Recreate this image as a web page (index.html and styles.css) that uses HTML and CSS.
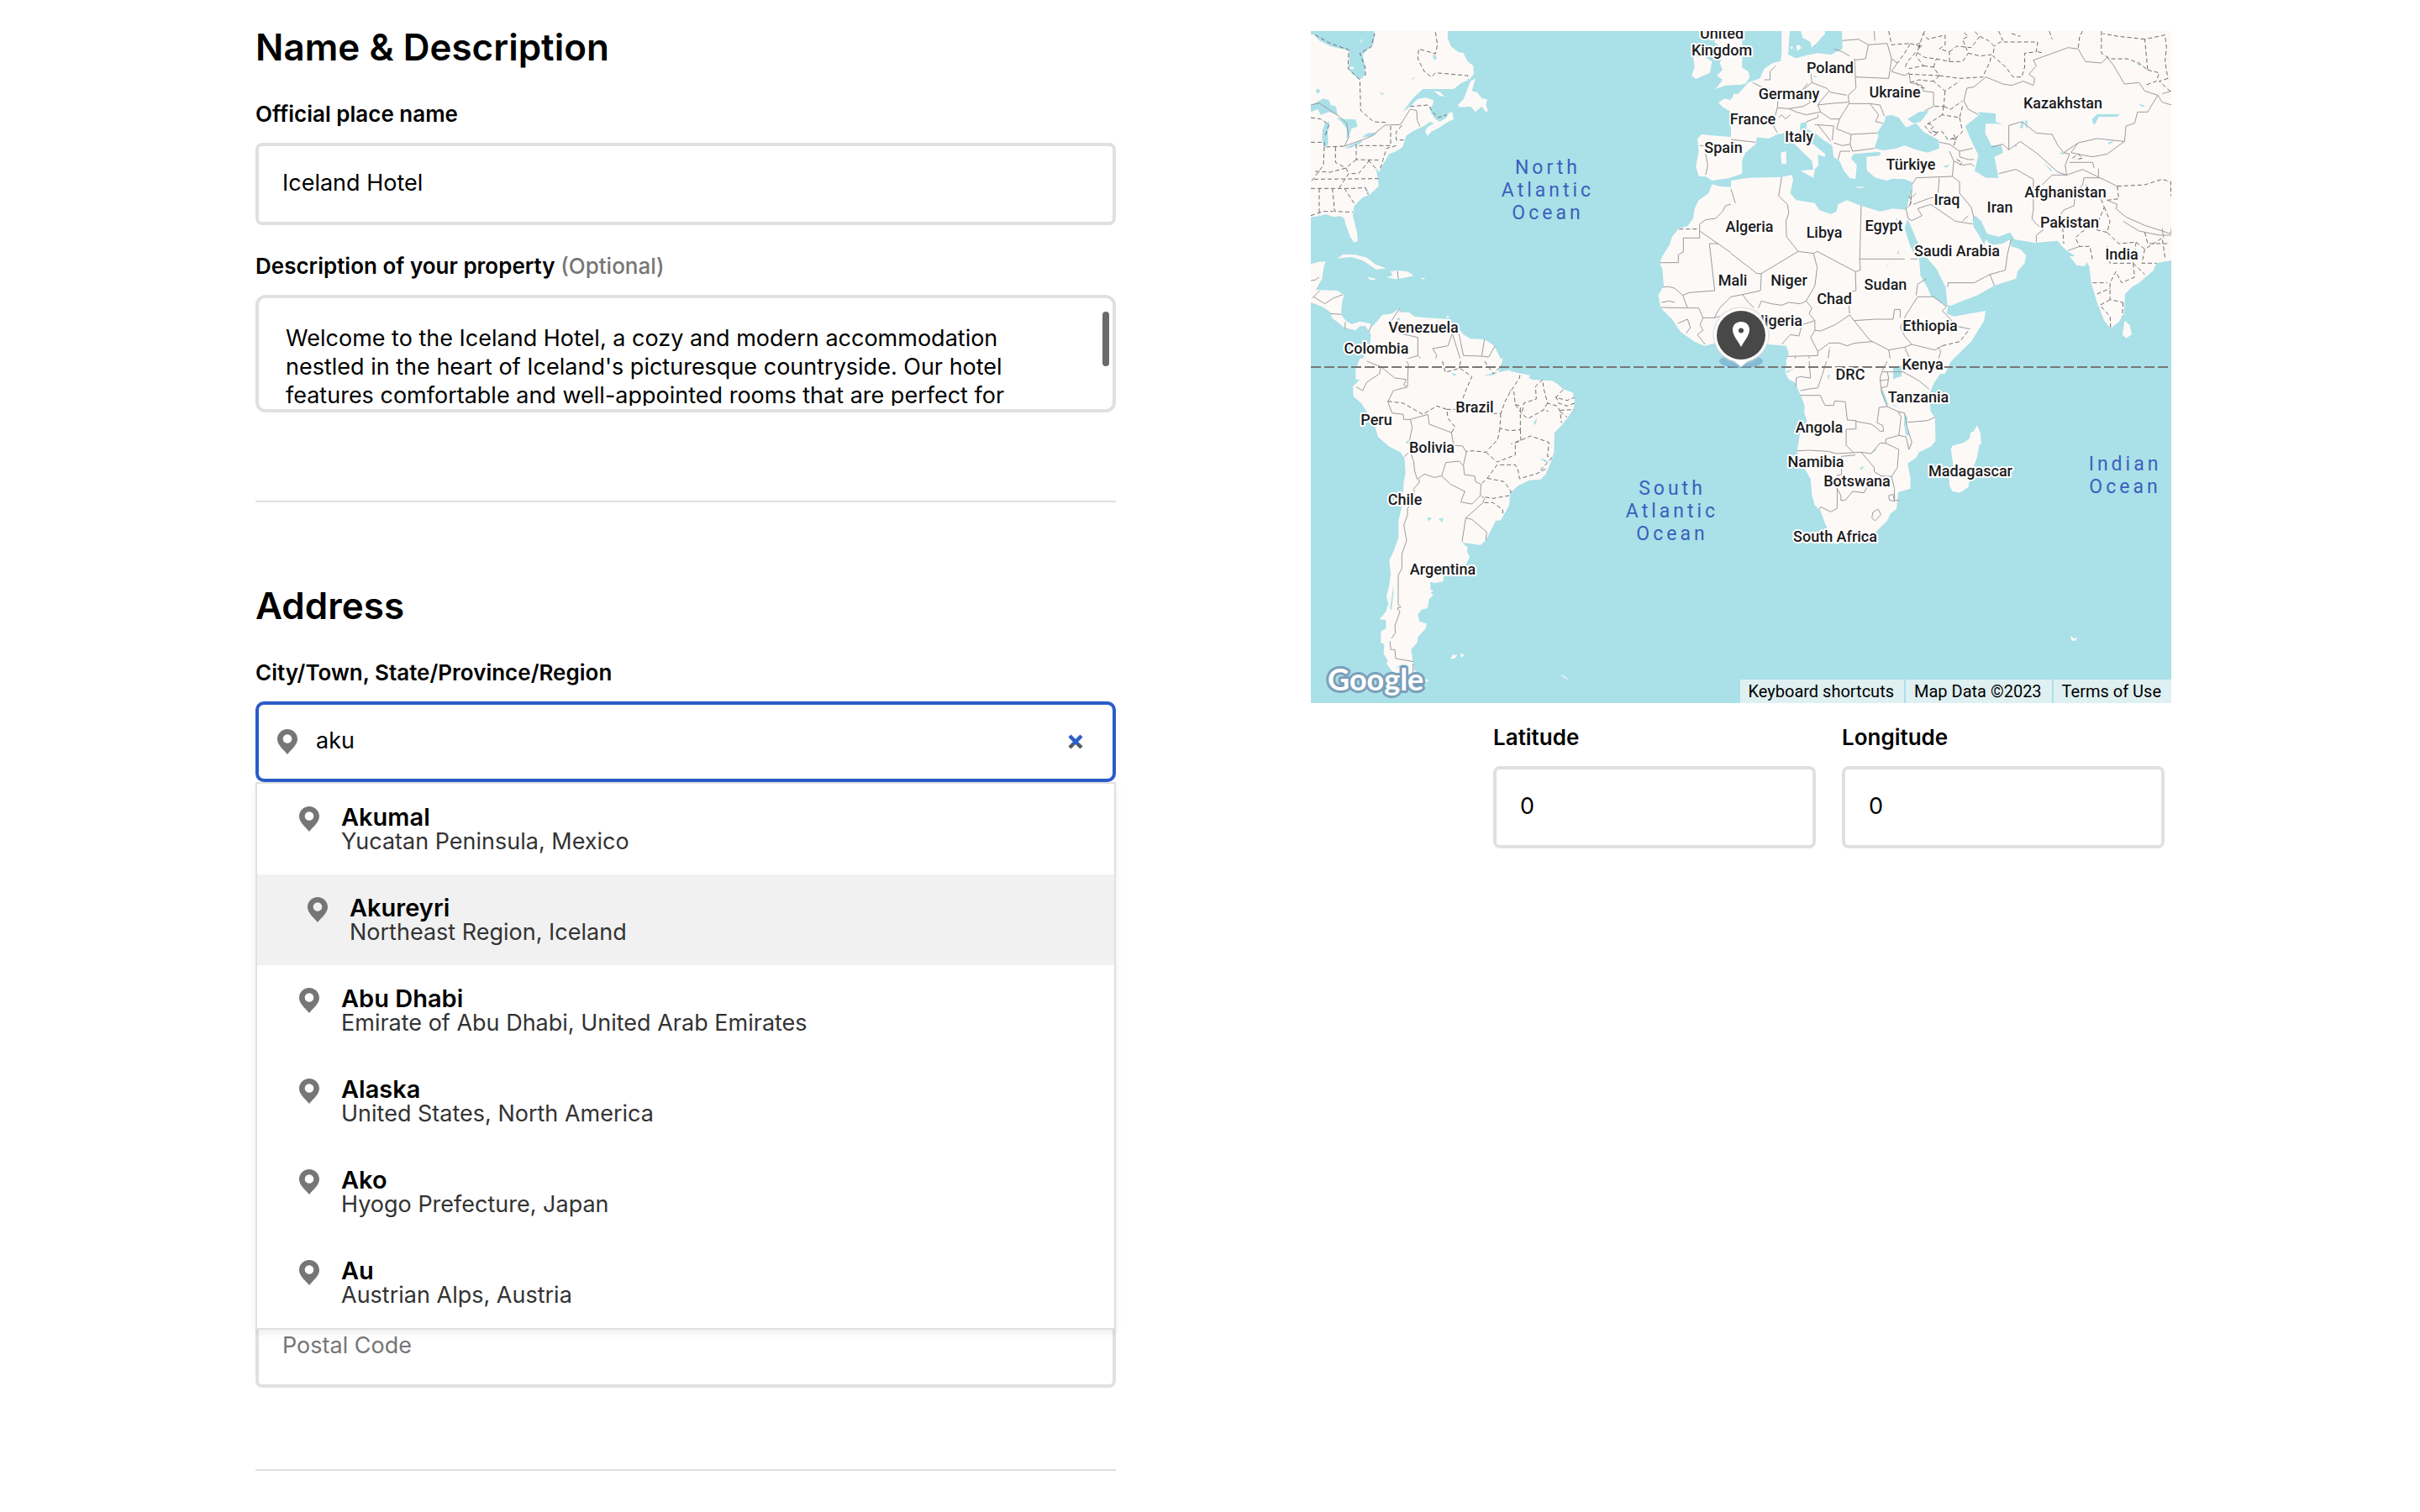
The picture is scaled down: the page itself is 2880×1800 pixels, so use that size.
FILE: index.html
```html
<!DOCTYPE html>
<html lang="en">
<head>
<meta charset="utf-8">
<title>Property details</title>
<link rel="stylesheet" href="styles.css">
</head>
<body>
<svg class="sprite" aria-hidden="true">
  <symbol id="pin" viewBox="0 0 24 30">
    <path fill-rule="evenodd" d="M12 0C5.300 0 0 5.200 0 11.800 0 19 7 24 12 30 17 24 24 19 24 11.800 24 5.200 18.700 0 12 0ZM12 6.200a5.300 5.300 0 1 1 0 10.600 5.300 5.300 0 0 1 0-10.600Z"/>
  </symbol>
</svg>
<main class="page">
  <form class="details">
    <section>
      <h2>Name &amp; Description</h2>
      <div class="field">
        <label for="name">Official place name</label>
        <input class="box" id="name" type="text" value="Iceland Hotel">
      </div>
      <div class="field">
        <label for="desc">Description of your property <span class="optional">(Optional)</span></label>
        <div class="area">
          <textarea id="desc">Welcome to the Iceland Hotel, a cozy and modern accommodation nestled in the heart of Iceland's picturesque countryside. Our hotel features comfortable and well-appointed rooms that are perfect for</textarea>
          <span class="thumb"></span>
        </div>
      </div>
    </section>
    <hr>
    <section>
      <h2>Address</h2>
      <div class="field">
        <label for="city">City/Town, State/Province/Region</label>
        <div class="search">
          <svg class="pin"><use href="#pin"/></svg>
          <input id="city" type="text" value="aku">
          <button type="button" aria-label="Clear">
            <svg viewBox="0 0 20 20" width="20" height="20">
              <defs><linearGradient id="cross" gradientUnits="userSpaceOnUse" x1="0" y1="0" x2="0" y2="20"><stop offset=".62" stop-color="#2a5fc4"/><stop offset=".68" stop-color="#555b62"/></linearGradient></defs>
              <path d="M3 3 17 17M17 3 3 17" stroke="url(#cross)" stroke-width="4.500" fill="none"/>
            </svg>
          </button>
        </div>
        <ul class="options">
          <li><svg class="pin"><use href="#pin"/></svg><div><strong>Akumal</strong><span>Yucatan Peninsula, Mexico</span></div></li>
          <li class="active"><svg class="pin"><use href="#pin"/></svg><div><strong>Akureyri</strong><span>Northeast Region, Iceland</span></div></li>
          <li><svg class="pin"><use href="#pin"/></svg><div><strong>Abu Dhabi</strong><span>Emirate of Abu Dhabi, United Arab Emirates</span></div></li>
          <li><svg class="pin"><use href="#pin"/></svg><div><strong>Alaska</strong><span>United States, North America</span></div></li>
          <li><svg class="pin"><use href="#pin"/></svg><div><strong>Ako</strong><span>Hyogo Prefecture, Japan</span></div></li>
          <li><svg class="pin"><use href="#pin"/></svg><div><strong>Au</strong><span>Austrian Alps, Austria</span></div></li>
        </ul>
      </div>
      <input class="box postal" type="text" placeholder="Postal Code" aria-label="Postal Code">
    </section>
    <hr class="last">
  </form>

  <aside class="location">
    <div class="map">
      <svg class="world" viewBox="0 0 1024 800" preserveAspectRatio="xMidYMid slice">
        <!-- North Atlantic, the Americas' east coast, West Africa -->
        <svg x="-10" y="-7" width="520" height="410" viewBox="0 0 1560 1230" preserveAspectRatio="none" overflow="visible">
          <path class="land" d="M0 30 45 35 60 55 100 75 140 85 165 90 168 130 163 155 180 175 205 195 222 180 224 150 215 105 235 85 252 70 258 40 255 0 515 0 520 21 518 45 530 75 555 95 575 100 590 130 610 145 612 175 595 195 570 205 540 228 430 228 395 260 358 310 385 290 410 265 440 258 468 268 465 285 455 295 460 315 475 335 490 345 515 330 520 315 535 310 540 335 515 348 490 365 460 380 447 395 438 380 445 365 470 350 455 345 430 362 395 378 370 395 358 435 335 450 310 460 295 485 285 500 275 525 262 510 270 550 272 575 240 605 215 615 185 645 180 680 195 740 197 770 185 777 170 755 152 705 150 690 135 682 110 685 85 675 60 682 35 685 0 685Z
          M618 190 600 200 575 265 555 285 560 293 600 290 618 310 640 290 655 310 663 305 655 285 660 265 640 262 625 240 605 235ZM468 235 490 238 508 255 490 252ZM205 65 214 45 212 60ZM165 150 180 148 187 156 172 157Z
          M125 833 145 818 190 820 230 830 262 855 298 868 265 873 245 860 215 840 175 828 150 830ZM300 900 322 895 315 878 345 876 375 880 398 895 360 903 330 907ZM230 900 255 903 262 910 240 908ZM422 902 440 902 430 908ZM513 1045 518 1036 525 1046Z
          M0 855 30 853 60 845 82 843 75 870 70 905 48 945 125 948 148 962 140 1000 138 1035 155 1055 175 1068 205 1058 240 1065 252 1075 285 1035 320 1030 348 1010 345 1025 380 1025 400 1040 440 1045 490 1048 520 1050 555 1080 575 1105 600 1120 650 1122 685 1145 712 1200 700 1240 200 1240 200 1215 240 1150 245 1105 225 1075 205 1075 190 1090 150 1080 105 1045 100 1025 70 1005 30 990 0 985Z
          M1462 568 1490 575 1530 578 1570 560 1570 1145 1510 1125 1480 1135 1435 1145 1400 1130 1350 1095 1320 1050 1280 1010 1270 965 1290 930 1285 870 1275 850 1285 825 1310 785 1320 755 1345 725 1375 718 1395 690 1400 655 1415 625 1450 600Z
          M1410 405 1425 390 1500 397 1540 400 1535 395 1545 365 1530 310 1500 292 1485 275 1510 262 1535 270 1540 243 1570 255 1570 530 1520 547 1462 555 1440 540 1415 540 1405 505 1415 450Z
          M1475 228 1500 195 1480 180 1500 160 1490 135 1510 90 1470 60 1490 21 1570 0 1570 212 1510 215ZM1395 110 1440 115 1462 130 1455 170 1405 192 1390 180 1400 150Z"/>
          <path class="water" d="M30 285 50 275 75 262 95 268 100 285 120 290 125 320 95 310 65 320 55 300 30 310ZM80 350 97 345 90 380 92 425 80 435 70 410 72 375ZM120 330 150 335 190 337 197 362 175 370 165 400 158 405 158 370 140 345ZM148 440 180 425 215 410 210 420 175 437ZM212 400 235 385 268 385 250 397ZM47 235 55 226 64 235 55 245ZM465 112 470 102 480 118 472 125ZM275 240 292 244 285 250ZM390 192 404 183 396 194ZM218 572 238 598 232 603ZM336 1050 345 1043 350 1052 342 1060Z"/>
          <path class="line" d="M385 300 350 355 295 357 245 397 212 410 150 432 165 400 158 350 130 325 60 278 30 285M385 300 408 305 410 340 420 362M1530 578 1545 635 1510 645 1500 665 1475 690 1440 695 1418 710 1418 760 1360 760 1360 810 1342 820 1342 848 1275 848M1418 735 1570 840M1485 780 1453 780 1472 948 1380 955 1358 965 1330 940 1310 934 1285 935M1358 965 1375 1010 1280 1008M1282 990 1310 985 1330 990M1375 1010 1415 1010 1430 1045 1470 1045 1490 1040M1430 1045 1420 1070 1430 1090 1410 1105 1438 1140M1340 1065 1375 1050 1385 1080 1370 1100M1470 1045 1490 1010 1530 970 1570 960M1418 430 1445 430 1440 460 1447 500 1440 535M1535 398 1570 412M348 1010 315 1060 345 1100 412 1115 412 1180 440 1208 470 1200 480 1180 465 1155 520 1145 535 1100M412 1180 372 1192 380 1240M220 1190 290 1230M535 1100 550 1150 565 1195 560 1240M555 1085 575 1180 640 1182 650 1122M640 1182 665 1185 688 1145M30 912 45 910 60 900M35 975 62 948M40 970 80 995 110 975 145 962M100 1030 138 1033M340 878 342 905M153 1060 152 1085M247 1070 237 1095"/>
          <path class="line dash" d="M45 35 100 65 165 88 163 155 205 195 208 305 255 345 295 347 295 357M225 180 224 150 205 100 245 78 258 30M475 25 482 70 475 102 415 85 412 120 435 165 460 185 475 170 590 180 592 195M30 418 78 418 78 435 150 432M118 435 118 490 155 510M192 425 192 480 280 482M42 550 272 548M30 583 180 583 225 580 235 605M60 583 60 680M107 583 115 665 180 668M78 435 75 500 30 560M240 482 200 530 165 530 130 583M155 510 100 525 45 522M192 480 155 510 165 530M315 360 315 430 200 430M355 358 335 380 335 410 362 410M335 430 300 440 285 490 275 520M150 583 187 640M235 482 265 515M385 290 450 285 465 310 485 330 515 320M30 680 75 665 110 665M30 330 65 335 95 355 80 400M1345 728 1418 728M500 1200 510 1240M640 1190 670 1240"/>
        </svg>
        <!-- Europe, Asia, North Africa -->
        <svg x="500" y="-7" width="540" height="410" viewBox="0 0 1568 1230" preserveAspectRatio="none" overflow="visible">
          <path class="land" d="M0 262 30 240 60 205 100 190 115 155 145 135 172 128 175 95 175 30 185 0 205 0 200 60 198 105 225 118 260 108 300 100 345 105 385 85 385 60 382 0 1568 0 1568 838 1522 840 1470 850 1460 875 1410 920 1385 935 1362 960 1358 1030 1340 1060 1312 1083 1290 1055 1265 990 1245 920 1238 860 1228 845 1225 860 1195 858 1170 825 1190 825 1160 805 1140 785 1130 770 1050 777 980 765 965 740 925 755 885 745 865 700 845 680 835 690 838 720 860 755 875 785 880 765 900 785 940 780 965 765 968 790 1000 800 1020 822 1015 850 990 880 985 905 910 930 850 965 800 985 760 1002 748 1000 742 935 710 870 680 835 645 775 610 690 605 660 615 620 628 585 625 560 600 550 555 548 540 555 500 545 470 520 468 470 515 465 515 453 475 455 425 460 415 475 435 500 430 550 410 545 390 520 375 485 355 470 350 430 320 410 290 385 260 370 262 345 240 350 238 370 250 395 285 425 325 460 325 470 300 462 303 500 285 518 280 485 240 445 205 410 185 385 160 390 130 405 90 400 85 425 50 455 35 490 35 510 0 545Z
          M236 0 248 45 275 60 278 80 300 60 325 30 325 0ZM225 75 235 70 243 82 230 92ZM203 75 215 78 210 88Z
          M0 90 25 110 35 150 60 165 65 185 50 210 0 212ZM240 520 290 515 285 545ZM172 455 190 450 192 495 175 495ZM425 575 465 578 445 582ZM1360 1055 1378 1070 1385 1105 1365 1118 1353 1105Z
          M0 555 60 545 175 542 210 535 215 550 205 600 225 625 290 635 305 660 345 675 365 665 370 640 400 625 450 645 515 665 560 655 605 660 612 690 600 722 620 790 650 835 655 895 680 940 690 965 750 1005 745 1030 770 1040 880 1020 875 1055 830 1130 760 1200 740 1245 195 1245 190 1200 200 1170 190 1145 130 1140 0 1140Z"/>
          <path class="water" d="M600 722 612 745 640 790 650 830 640 830 620 790ZM495 440 510 395 505 385 530 345 535 325 555 320 580 330 605 365 640 350 665 380 718 410 720 440 680 455 640 445 600 430 570 440 530 447ZM610 335 650 310 685 305 655 345 630 350ZM810 360 860 318 850 310 915 315 915 345 938 352 880 352 878 385 900 430 935 430 940 455 910 470 925 545 880 545 842 520 855 465 825 400ZM1005 345 1012 340 1008 370 998 365ZM1015 342 1025 340 1022 372ZM1250 350 1248 335 1265 318 1343 318 1335 327 1270 328 1258 355ZM470 458 515 453 515 465 480 468ZM1300 420 1325 412 1310 425ZM1135 455 1158 455 1145 462ZM1400 135 1420 140 1410 145ZM1408 280 1432 288 1420 292ZM735 503 755 497 745 510ZM535 865 547 845 540 860ZM575 815 578 800 582 820ZM570 690 575 690 573 705ZM283 178 300 186 290 186ZM1080 490 1110 520 1105 522ZM340 1148 344 1150 334 1190ZM980 428 990 428 985 436Z"/>
          <path class="line" d="M75 205 115 225 135 230 165 245 160 295 145 355 160 385M115 195 135 195 135 165 155 145M160 295 200 298 250 290 275 275 240 240 280 205 275 165M165 245 240 240 265 208M280 205 330 225 345 240 400 250M427 120 430 185 432 225 405 250 408 280 375 335 345 335 310 310 300 285 340 280 405 275M340 235 310 270 300 285M200 298 225 310 260 320 310 310M165 330 175 320 188 335 205 320M260 345 300 330 300 320M290 355 355 360 350 410M300 355 345 415M375 335 365 370 415 390 505 385M415 390 412 425 385 430 355 420M412 425 420 450 495 440M370 480 378 450 412 450M408 280 480 280 510 320 500 345 525 350M480 280 515 285 530 325M385 55 440 50 475 70 465 120 425 125M358 85 385 95 410 110M475 70 540 65 555 120 545 190 430 185M495 21 497 55M555 120 575 135 555 165 600 180 615 170 620 205 660 215 665 235 700 240 700 290 670 305M0 408 85 418M0 585 15 635
          M720 418 755 425 790 450 835 440M755 450 770 485 800 500 830 495 840 505M790 450 790 470 820 480 840 480M770 485 765 540 640 545 625 570M720 545 715 610 680 620 630 640M765 540 790 560 790 600 830 650 840 690M625 590 620 640 605 655 612 690 625 698 660 680 645 655 690 640 775 700 835 710M800 700 820 680M640 600 625 615
          M960 445 960 358 1005 345 1055 385 1110 390 1130 430 1150 455 1200 420 1265 405 1360 415 1365 360 1395 350 1405 310 1440 310 1475 250 1430 235 1410 205 1360 210 1320 140 1300 115 1280 135 1225 130 1200 85 1165 80 1045 125 1055 145 1030 175 1050 190 1045 215 1010 200 970 215 940 210 905 195 880 185 840 220 815 225 805 270 820 300 855 320M900 435 940 425 960 445 1000 415 1060 460 1130 525 1160 535 1215 515 1275 545 1335 575M1150 455 1170 460 1155 500 1160 535M1200 420 1175 455 1220 465 1250 470 1300 460 1360 415M1170 490 1250 490 1255 510M1270 512 1270 540M925 530 985 515 1045 550 1045 660 1040 690 1055 710 1080 730 1055 750 1055 775M1075 570 1110 535 1160 535M1130 690 1150 660 1185 645 1190 600 1215 570 1220 545 1275 545M1475 250 1490 275 1522 285M1490 245 1522 235
          M1330 655 1365 685 1430 715 1520 745 1522 725M1355 700 1410 735 1480 750 1522 750M1300 625 1335 640 1330 655M1490 725 1495 760M1205 790 1165 805
          M750 920 840 920 895 890 948 875 955 820 968 765M895 890 910 930M748 935 752 918
          M175 542 165 610 195 640 200 670 190 700 192 755 232 808 105 887 90 887 0 815M105 887 102 948 40 962 0 970M450 645 445 835 600 835M620 835 645 835M232 808 285 815 298 808 430 880 447 875 445 835M430 880 432 948 405 955 410 1030M285 815 298 865 290 930 260 985 240 995 200 990 175 1000 140 995 105 985 95 1010M40 962 60 990 80 1010M260 985 280 1010 270 1030 290 1055 245 1070 235 1110 205 1105 175 1140M290 1090 310 1092 360 1070 410 1035 425 1055 500 1050 560 1050 565 1015 585 1015 585 1045M645 970 700 970 745 1005M645 970 605 1035 585 1080 600 1110 625 1140 705 1160 730 1145M640 965 645 925 675 905M290 1055 290 1090 275 1115 300 1165M425 1055 480 1125 545 1160 600 1150 625 1140M300 1165 340 1135 375 1135 400 1145 430 1135 490 1130M300 1165 300 1180 195 1183M340 1160 330 1230M545 1160 550 1190 525 1235M600 1150 620 1195 595 1230M715 1150 725 1165 715 1200M745 1005 730 1020 745 1035 780 1075 825 1085M195 1200 222 1200 222 1183M270 1183 272 1235"/>
          <path class="line dash" d="M545 21 555 70 620 65 600 100 575 135M620 65 650 75 665 30 680 50 740 35 740 70 720 85 755 95 755 130 710 120 670 115 640 95 610 130 600 155M665 30 670 21M650 75 640 110 665 145 615 155M665 145 700 150 720 180 615 175M700 150 710 120M720 180 790 190 870 185 895 130 900 105 860 110 820 100 800 50 820 40 800 21M755 130 800 130 820 100M755 95 780 75 830 80 860 40 840 21M860 40 890 55 910 75 905 110 950 150 975 185 1005 185 1015 150 1015 100 1055 95 1060 60 930 60 910 75M720 180 700 200 740 235 790 200M740 235 735 290 700 290M735 290 760 300 800 270M735 290 730 320 790 330 800 290M730 320 700 340 670 360 690 385 730 380 750 410 780 400M790 330 800 380 780 400 770 430M620 205 650 195 690 200 700 200M1060 95 1080 100M1100 21 1110 50M1200 80 1205 40 1215 21M1280 21 1280 100 1310 120 1370 120 1410 135 1440 160 1430 50 1500 35 1505 80 1500 130 1510 190M1430 50 1340 40 1285 30M1440 160 1480 170 1470 200 1430 215M1510 190 1480 200 1522 240M925 21 940 55M970 30 1000 40
          M1335 575 1430 570 1490 550 1520 560 1520 610M1335 575 1340 620 1300 625 1270 600 1225 570M1270 600 1290 650 1270 700 1210 740 1190 760 1205 790 1240 790 1250 840M1290 650 1310 700 1300 740 1260 730M1300 740 1340 780 1400 775 1430 800 1490 760 1500 830M1300 790 1310 850 1390 850 1395 900 1350 920 1330 880 1310 920 1310 980 1355 990M1250 920 1300 920M1265 960 1310 940M1310 980 1275 1000 1310 1040 1312 1080M1355 990 1352 1040M1390 850 1430 890M1400 775 1390 850M1430 800 1420 850 1470 850M1145 700 1150 780M1430 740 1440 780 1510 780
          M730 1145 790 1130 825 1085"/>
          <path class="line dash" d="M640 70 655 62 650 85 660 72M680 350 700 360 690 375 715 385 700 395M770 390 780 410 765 405M615 610 625 625 615 650M1180 475 1200 460 1215 475 1190 480M780 480 800 490 790 500M640 205 650 220 670 225"/>
        </svg>
        <!-- South America -->
        <svg x="-10" y="393" width="520" height="420" viewBox="0 0 1560 1260" preserveAspectRatio="none" overflow="visible">
          <path class="land" d="M205 -10 190 30 190 65 205 66 180 90 182 125 210 150 255 220 270 270 310 305 350 325 365 350 368 400 362 430 355 520 343 570 343 630 325 680 310 710 315 760 310 800 300 840 312 890 325 800 325 830 318 890 305 870 298 895 275 922 298 925 298 955 280 965 280 1005 292 1010 290 1045 305 1070 300 1080 318 1105 345 1125 380 1125 395 1150 425 1155 452 1140 430 1130 400 1105 395 1075 388 1030 410 1005 412 985 440 955 443 937 418 930 412 905 425 887 447 882 452 850 468 835 457 828 468 820 457 815 457 788 475 792 502 787 505 765 580 735 597 700 588 680 590 665 570 648 600 652 635 657 655 640 690 570 708 568 738 515 742 470 770 445 810 425 850 422 868 405 885 365 898 325 900 255 920 235 945 205 968 170 972 145 965 112 930 100 912 82 890 70 820 66 808 60 812 50 740 35 722 48 745 30 700 40 716 -10ZM528 1063 538 1048 553 1050 543 1062ZM562 1045 578 1047 570 1060ZM918 1120 935 1125 953 1140 935 1130Z"/>
          <path class="water" d="M445 558 463 560 450 572ZM485 563 503 560 500 575ZM645 52 700 38 680 50ZM825 222 838 200 832 228ZM848 346 880 357 865 360ZM530 42 548 45 545 54ZM368 290 382 280 380 296ZM330 1098 378 1080 350 1085Z"/>
          <path class="line" d="M230 0 280 20 275 45 230 75 215 105 192 92M280 20 330 60 370 65 362 85 375 92 325 105 305 145 320 185 360 190 362 208 385 208 448 190 453 225 532 255 540 300 572 303 585 325 575 370 578 405 615 410 618 430 638 440 635 480 605 510 565 503 580 465 530 440 497 410 512 362 560 357 573 372M385 208 392 235 383 280 385 325 398 360 400 390 410 422 435 403 470 415 497 410M362 342 385 322M418 422 416 435 398 455 400 500 375 525 375 550 362 585 372 640 355 690 355 740 342 765 342 870 352 878 338 882 348 895 330 945 332 970 318 990M313 1000 315 1030 330 1030 333 1062 397 1073M395 1080 395 1120M638 480 650 490 645 505 583 560 570 645M583 560 605 565 658 610 655 640M375 90 378 10 372 0"/>
          <path class="line dash" d="M305 143 360 150 430 190 480 160 515 172 520 205 545 235 532 255M515 172 548 172M680 187 708 187 725 140 745 105 775 60 778 40M708 187 705 240 740 248 778 245 778 160 760 155 755 110 740 105M705 240 697 280 655 325 610 320 585 322M655 325 695 360 760 335 760 290 815 267 880 290 875 340 890 345 850 390 850 380M868 385 840 400 775 420 770 390 760 370 695 370 660 418 638 440M660 418 720 430 745 465 738 480 680 490 650 485M650 505 680 505 715 530 715 545M778 245 780 285 745 295M760 155 785 190 805 205 865 172 878 180M785 180 790 150 835 135 832 90 857 66 862 100 875 150 910 160 920 180 925 220M875 150 860 172M905 125 915 150 945 160 972 150M930 102 905 130 945 140 970 130M920 175 970 173M920 180 945 200M500 0 510 40 562 25 605 55 585 100 570 140M565 0 560 25M650 0 682 45 712 15"/>
        </svg>
        <!-- Southern Africa and the Indian Ocean -->
        <svg x="500" y="393" width="540" height="430" viewBox="0 0 1568 1290" preserveAspectRatio="none" overflow="visible">
          <path class="land" d="M195 -10 187 40 200 65 220 75 240 120 255 160 253 185 262 210 255 240 240 250 228 325 255 385 275 420 280 480 290 515 310 535 325 580 345 620 350 645 365 655 400 640 440 630 495 615 540 570 550 545 572 528 578 468 620 455 620 415 610 365 640 345 650 325 690 305 707 285 705 200 690 180 685 120 700 80 740 20 770 -10ZM850 228 862 255 865 295 858 300 850 345 830 400 820 450 790 470 765 465 755 445 753 410 768 370 760 315 765 302 805 290 825 275 828 255 840 250ZM1173 980 1185 990 1198 987 1190 998 1177 998Z"/>
          <path class="water" d="M560 20 590 15 590 55 575 58 560 65ZM600 190 610 200 605 235 617 265 605 265 598 225ZM520 95 528 110 545 160 535 150 520 115ZM333 50 343 48 337 66ZM443 382 460 374 452 388ZM558 152 580 165 565 160ZM485 328 505 308 498 322ZM187 38 220 25 195 42Z"/>
          <path class="line" d="M270 0 275 60 240 55 225 60 225 90M330 0 315 50 300 95 265 100 240 105M240 122 308 122 325 158 355 158 358 142 395 145 402 210 432 212 432 242 398 243 398 300 425 328M432 215 485 225 500 235 515 250 527 250 525 230 505 220 512 165 540 162M228 320 270 318 335 322 365 330 450 325 485 330 515 292 535 293 535 278 580 265 588 200 578 180 540 162 520 110 515 60 525 30 540 0M535 293 580 315 575 380 555 412 520 410 495 395 495 380 450 325M430 335 382 340 382 405 367 408 367 525 345 538 310 520 305 530M367 455 380 480 380 497 395 497 420 465 460 470 475 440 520 410M555 412 565 455 565 497 580 497M545 480 560 475 565 500 548 497ZM490 540 508 528 518 548 498 570 487 560ZM525 38 595 38 650 70 685 100M610 218 680 212 705 200M578 180 600 185 610 240 625 290 615 315 605 270 580 265M540 38 545 60 540 90 520 95M515 70 545 65"/>
        </svg>
        <path class="equator" d="M0 400H1024"/>
        <g class="ocean">
          <text x="282" y="170">North</text><text x="282" y="197">Atlantic</text><text x="282" y="224">Ocean</text>
          <text x="430" y="552">South</text><text x="430" y="579">Atlantic</text><text x="430" y="606">Ocean</text>
          <text x="969" y="523">Indian</text><text x="969" y="550">Ocean</text>
        </g>
        <g class="country">
          <text x="134" y="359">Venezuela</text><text x="78" y="384">Colombia</text><text x="489" y="9">United</text><text x="489" y="29">Kingdom</text>
          <text x="491" y="145">Spain</text><text x="618" y="50">Poland</text><text x="569" y="81">Germany</text><text x="526" y="111">France</text>
          <text x="695" y="79">Ukraine</text><text x="895" y="92">Kazakhstan</text><text x="581" y="132">Italy</text><text x="714" y="165">Türkiye</text>
          <text x="757" y="207">Iraq</text><text x="820" y="216">Iran</text><text x="898" y="198">Afghanistan</text><text x="903" y="234">Pakistan</text>
          <text x="965" y="272">India</text><text x="522" y="239">Algeria</text><text x="611" y="246">Libya</text><text x="682" y="238">Egypt</text>
          <text x="769" y="268">Saudi Arabia</text><text x="502" y="303">Mali</text><text x="569" y="303">Niger</text><text x="684" y="308">Sudan</text>
          <text x="623" y="325">Chad</text><text x="556" y="351">Nigeria</text><text x="737" y="357">Ethiopia</text><text x="728" y="403">Kenya</text>
          <text x="642" y="415">DRC</text><text x="723" y="442">Tanzania</text><text x="605" y="478">Angola</text><text x="601" y="519">Namibia</text>
          <text x="650" y="542">Botswana</text><text x="624" y="608">South Africa</text><text x="785" y="530">Madagascar</text><text x="195" y="454">Brazil</text>
          <text x="78" y="469">Peru</text><text x="144" y="502">Bolivia</text><text x="112" y="564">Chile</text><text x="157" y="647">Argentina</text>
        </g>
        <text class="brand" x="20" y="785">Google</text>
        <ellipse cx="512" cy="393" rx="26" ry="8" fill="#6ba3c7" opacity=".6"/>
        <circle cx="512" cy="362" r="34" fill="#d5d5d8" opacity=".5"/>
        <path d="M512 330a32 32 0 0 1 8 63L512 400 504 393a32 32 0 0 1 8-63Z" fill="#fff"/>
        <circle cx="512" cy="362" r="29" fill="#484848"/>
        <path fill-rule="evenodd" fill="#fff" d="M512 346c-6 0-10 4-10 9.500 0 7 6 13 10 20.500 4-7.500 10-13.500 10-20.500 0-5.500-4-9.500-10-9.500ZM512 353.500a3 3 0 1 1 0 6 3 3 0 0 1 0-6Z"/>
      </svg>
      <div class="credits">
        <button type="button">Keyboard shortcuts</button>
        <span>Map Data ©2023</span>
        <a href="#terms">Terms of Use</a>
      </div>
    </div>
    <div class="coords">
      <div class="field">
        <label for="lat">Latitude</label>
        <input class="box" id="lat" type="text" value="0">
      </div>
      <div class="field">
        <label for="lng">Longitude</label>
        <input class="box" id="lng" type="text" value="0">
      </div>
    </div>
  </aside>
</main>
</body>
</html>
```

FILE: styles.css
```css
* {
  box-sizing: border-box;
}

body {
  margin: 0;
  background: #fff;
  color: #000;
  font: 27px/28px Inter, "Liberation Sans", sans-serif;
}

input,
textarea,
button {
  font: inherit;
  color: inherit;
  border: 0;
  outline: 0;
  margin: 0;
  padding: 0;
  background: none;
}

.sprite {
  position: absolute;
  width: 0;
  height: 0;
}

.page {
  display: grid;
  grid-template-columns: 1fr 1fr;
  gap: 232px;
  align-items: start;
  padding: 28px 296px 48px 304px;
}

h2 {
  margin: 0 0 38px;
  font-size: 44px;
  line-height: 56px;
  font-weight: 600;
}

.field + .field {
  margin-top: 35px;
}

label {
  display: block;
  margin-bottom: 20px;
  font-size: 26px;
  font-weight: 600;
}

.optional {
  color: #767676;
  font-weight: 500;
}

.box {
  display: block;
  width: 100%;
  height: 98px;
  padding: 0 28px 4px;
  border: 4px solid #e0e0e0;
  border-radius: 8px;
  background: #fff;
}

.box::placeholder {
  color: #767676;
  opacity: 1;
}

.area {
  position: relative;
  height: 140px;
  padding: 31px 0 0 32px;
  border: 4px solid #e0e0e0;
  border-radius: 12px;
}

.area textarea {
  display: block;
  width: 100%;
  max-width: 900px;
  height: 97px;
  line-height: 34px;
  resize: none;
  overflow: hidden;
}

.thumb {
  position: absolute;
  top: 16px;
  right: 4px;
  width: 8px;
  height: 65px;
  border-radius: 4px;
  background: #6b6b6b;
}

hr {
  height: 2px;
  margin: 105px 0 95px;
  border: 0;
  background: #e0e0e0;
}

hr.last {
  margin: 97px 0 0;
}

.pin {
  flex: none;
  width: 24px;
  height: 30px;
  fill: #767676;
}

.search {
  display: flex;
  align-items: center;
  gap: 22px;
  height: 96px;
  padding: 0 30px 0 22px;
  border: 4px solid #2a5bc8;
  border-radius: 10px;
}

.search input {
  flex: 1;
  min-width: 0;
  padding-bottom: 2px;
}

.search button {
  display: flex;
  padding: 4px;
}

.options {
  position: relative;
  z-index: 1;
  margin: 0;
  padding: 0;
  list-style: none;
  border: 2px solid #e0e0e0;
  background: #fff;
  box-shadow: 0 4px 8px rgba(80, 40, 0, .08);
}

.options li {
  display: flex;
  gap: 26px;
  height: 108px;
  padding: 25px 50px 0;
  line-height: 29px;
}

.options li.active {
  padding-left: 60px;
  background: #f1f1f1;
}

.options .pin {
  margin-top: 2px;
}

.options strong,
.options span {
  display: block;
}

.options strong {
  font-size: 29px;
  font-weight: 600;
}

.options span {
  color: #333;
}

.postal {
  margin-top: -29px;
}

.location {
  padding-top: 9px;
}

.map {
  position: relative;
  overflow: hidden;
  aspect-ratio: 1024 / 800;
  background: #aae0e8;
  font-family: Roboto, "Liberation Sans", sans-serif;
}

.world {
  display: block;
  width: 100%;
  height: 100%;
}

.land {
  fill: #fdf9f7;
}

.water {
  fill: #aae0e8;
}

.line {
  fill: none;
  stroke: #9b9b9d;
  stroke-width: 1px;
  vector-effect: non-scaling-stroke;
}

.dash {
  stroke: #6e6e70;
  stroke-dasharray: 5 3;
}

.equator {
  stroke: #777;
  stroke-width: 2px;
  stroke-dasharray: 12 4;
}

.ocean {
  fill: #3a5fbd;
  font-size: 23px;
  letter-spacing: 4px;
  text-anchor: middle;
}

.country {
  fill: #1b1b1d;
  stroke: #fff;
  stroke-width: 4px;
  stroke-linejoin: round;
  paint-order: stroke;
  font-size: 18px;
  font-weight: 500;
  text-anchor: middle;
}

.brand {
  fill: #fff;
  stroke: #7a9fba;
  stroke-width: 6px;
  stroke-linejoin: round;
  paint-order: stroke;
  font-family: Lato, sans-serif;
  font-size: 36px;
  font-weight: 700;
}

.credits {
  position: absolute;
  right: 0;
  bottom: 0;
  display: flex;
  gap: 2px;
  font-size: 20px;
  line-height: 27px;
}

.credits > * {
  padding: 1px 12px 0 10px;
  background: #dff0f2;
  color: #000;
  text-decoration: none;
}

.coords {
  display: flex;
  justify-content: flex-end;
  gap: 31px;
  padding: 27px 8px 0 0;
}

.coords .field {
  flex: 0 1 384px;
  margin: 0;
}
```
